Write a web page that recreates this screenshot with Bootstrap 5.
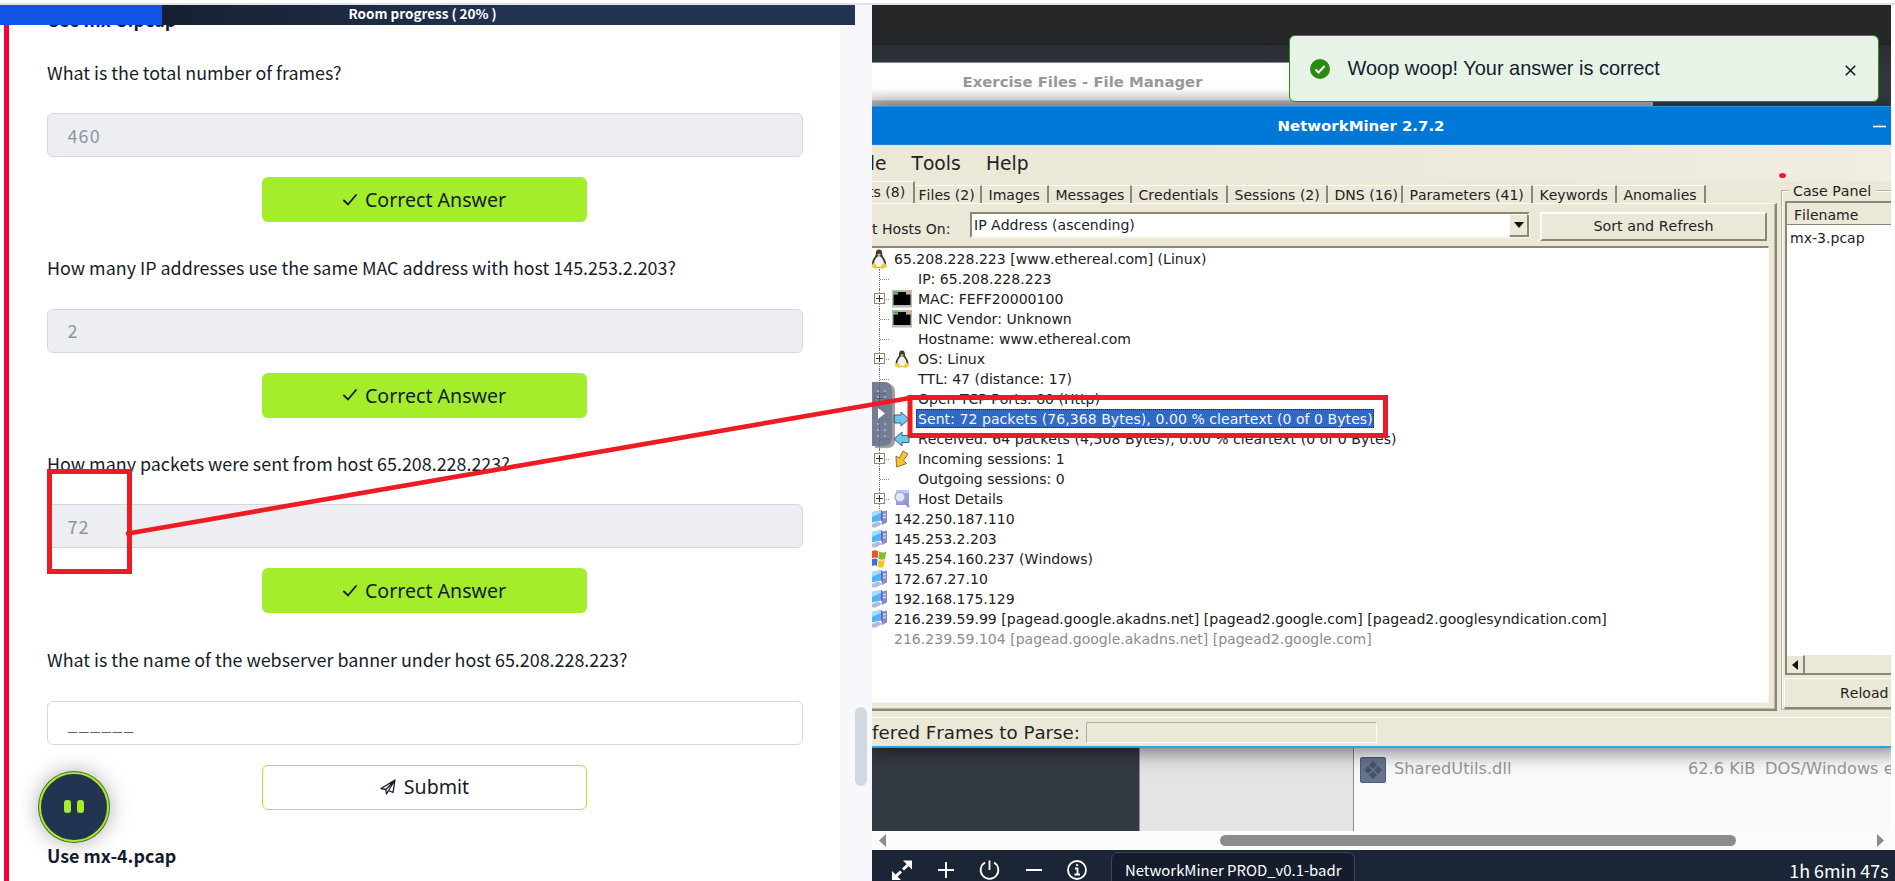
<!DOCTYPE html>
<html lang="en">
<head>
<meta charset="utf-8">
<title>Room - NetworkMiner</title>
<link href="https://cdn.jsdelivr.net/npm/bootstrap@5.3.0/dist/css/bootstrap.min.css" rel="stylesheet">
<script src="https://cdn.jsdelivr.net/npm/bootstrap@5.3.0/dist/js/bootstrap.bundle.min.js"></script>
<style>
body{height:881px;overflow:hidden;font-family:"Noto Sans CJK SC",sans-serif;font-size:17.89px;line-height:28px;color:#151c2b;background:#fff}
.topline{height:5px;border-bottom:2px solid #e1e2e8}
.split{height:876px}
/* left pane */
.room{width:872px;background:#f8f8fc}
.progressbar{width:855px;height:20px;z-index:2;background:linear-gradient(90deg,#172030 19%,#223452 62%);font-size:13.5px;line-height:16px;color:#fff}
.progressbar .done{width:162px;background:#1054e6}
.progressbar .lbl{left:348.5px;top:0}
.task{width:840px;height:876px;background:#fff;margin-top:-20px}
.task-in{border-left:5px solid #f0003c;margin-left:4px;padding-left:38px;height:876px}
.task p{margin:0}
.q{height:195.67px}
.q2 p,.q4 p{position:relative;top:-1px}
.q2 .answer{line-height:40px}
.q3{height:196.27px}
.q4{height:195.07px}
.answer{width:756px;height:44px;margin-top:27px;border:1px solid #d3d8e0;border-radius:6px;background:#edeef2;color:#8c95a6;padding:0 19.5px;line-height:42px;letter-spacing:1.1px;font-size:18px}
.answer.blank{background:#fff;color:#5d6675;letter-spacing:1.15px}
.actbtn{width:325px;height:45px;margin:20px 0 0 215px;border-radius:6px;background:#a3ed2a;font:19.6px/45px "Noto Sans",sans-serif;color:#151c2b}
.actbtn.line{background:#fff;border:1px solid #a3ed2a;line-height:42px}
.thumb{width:12px;height:79px;left:855px;top:702px;border-radius:6px;background:#d3d8e0}
.fab{left:39px;top:767px;width:70px;height:70px;border-radius:50%;background:#223452;border:2.5px solid #a3ed2a;box-shadow:0 0 0 1px #4d6a2e,0 0 22px rgba(0,0,0,.35)}
.fab i{width:6.5px;height:13px;border-radius:3px;background:#a3ed2a;margin-bottom:2px}
/* remote machine */
.vm{width:1023px;background:#fdfdfd}
.screen{width:1019px;height:826px;background:linear-gradient(#262729 0,#262729 38px,#1e2022 39px,#2b3036 41px,#343a42 90px);font-family:"DejaVu Sans",sans-serif;font-size:14.06px;line-height:20px;font-kerning:none;color:#232323}
.screen .filewin{left:0;top:57px;width:781px;height:60px;border-top:1px solid #85878a;background:linear-gradient(#fff 26px,#dedede 37px,#b0b0b0 38px)}
.filewin b{font-size:14.86px;color:#999;margin-left:90.5px;line-height:20px;margin-top:9px;display:block}
.filelist{left:267px;top:730px;width:760px;height:100px;background:#f9f9f9;color:#979797;border-left:1px solid #8d8f92}
.filelist .side{width:214px;flex:none;background:#e4e4e4;border-right:1px solid #8d8d8d}
.filelist .ln{font-size:16.2px;padding:22px 0 0 6px}
.filelist .ln svg{flex:none}
.filelist .ln span{flex:none;padding-top:2px}
.miner{left:0;top:101px;width:1030px;height:642px;background:#ebe8d8;border-bottom:2px solid #2ea3de;box-shadow:0 3px 20px rgba(0,0,0,.55)}
.titlebar{height:39px;background:#0078d7;border-top:1px solid #2b96dc;border-bottom:1px solid #2585d0;color:#fff;font-size:14.95px;line-height:39px}
.menus{height:36px;font-size:18.7px;line-height:38px;background:linear-gradient(90deg,#ebe8d8 30%,#f0ede1)}
.body-row{height:530px}
.tabs-col{width:905px}
.tabstrip{height:22px;padding-top:4px}
.tabstrip span{height:18px;line-height:19px;border-right:2px solid #8a8776;border-top:1px solid #fff;padding-left:6.5px;white-space:nowrap;flex:none}
.tabstrip .cur{height:22px;margin-top:-4px;line-height:20px;padding-left:0}
.tabbody{height:508px;border-right:2px solid #8a8776;border-bottom:2px solid #8a8776;border-top:1px solid #fdfcf8;padding-right:6px;box-shadow:inset -1px -1px 0 #bdb9a8}
.filt{height:42px;padding-top:8px}
.combo{width:560px;height:26px;margin-left:20px;background:#fff;border:2px solid;border-color:#8a8776 #f7f5ec #f7f5ec #8a8776;line-height:23px;padding-left:2px}
.combo u{width:19px;height:22px;background:#ebe8d8;border:1px solid;border-color:#fff #8a8776 #8a8776 #fff;box-shadow:1px 1px 0 #8a8776}
.sortbtn{width:227px;height:29px;margin-left:10px;border:2px solid;border-color:#fdfcf8 #8a8776 #8a8776 #fdfcf8;line-height:25px;font-size:14.3px}
.hosts{height:457px;background:#fff;border-top:2px solid #8a8776;border-right:1px solid #f7f5ec;border-bottom:1px solid #f7f5ec;padding-top:.5px;line-height:20px;color:#202020}
.hosts div{height:20px;white-space:nowrap;display:flex;align-items:center}
.hosts svg{flex:none}
.kid:before{content:"";width:11px;height:20px;margin-left:7px;flex:none;border-left:1px dotted #777;background:linear-gradient(90deg,#888 50%,transparent 0) 0 10px/2px 1px repeat-x}
.kid .bx{width:11px;height:11px;background:#fff;border:1px solid #8a8776;margin-left:-16.5px;margin-right:5.5px;flex:none}
.kid .bx:before,.kid .bx:after{content:"";position:absolute;background:#333}
.kid .bx:before{left:1px;top:4px;width:7px;height:1px}.kid .bx:after{left:4px;top:1px;width:1px;height:7px}
.kid .ic{width:20px;height:18px;margin:0 6px 0 2px;flex:none}
.root .ic{width:18px;height:20px;margin-right:4px}
.sel{background:#316ac5;color:#f2f5fb;outline:1px dotted #222;outline-offset:-1px;padding:0 1px 0 2px;margin-left:-2px;height:19px;line-height:20px}
.pk{letter-spacing:.05px}
.case-col{width:120px;margin-left:4px}
.grp{margin-top:9px;height:520px;border:1px solid #b5b2a1;box-shadow:inset 1px 1px 0 #fdfcf8}
.grp .cap{margin:-10px 0 0 7px;background:#ebe8d8;padding:0 4px;width:87px;height:20px;font-size:14.2px;line-height:20px;white-space:nowrap}
.caselist{margin:0 0 0 3px;height:474px;border:2px solid #8a8776;background:#fff}
.caselist .hd{background:#ebe8d8;height:22px;border-bottom:1px solid #8a8776;line-height:24px;padding-left:7px;margin-right:-10px}
.caselist .row1{padding-left:3px;line-height:20px;height:430px;padding-top:3px}
.hs{height:18px;background:#ebe8d8}
.hs b{width:18px;border-right:2px solid #8a8776;border-top:1px solid #fff}
.reload{margin:3px 0 0 2px;height:31px;border:1px solid #fff;border-bottom:2px solid #8a8776;line-height:29px;padding-left:55px;white-space:nowrap}
.stat{font-size:18.25px;line-height:29px;border-top:1px solid #fbfaf4;margin-top:6px;height:29px}
.groove{width:291px;height:21px;border:1px solid;border-color:#b0ad9c #fdfcf8 #fdfcf8 #b0ad9c;margin:4px 0 0 6px}
.handle{left:0;top:377px;width:20px;height:64px;border-radius:0 7px 7px 0;background:rgba(84,98,126,.82);box-shadow:3px 2px 1px rgba(90,90,90,.6)}
.hscroll{height:19px;background:#fcfcfc}
.dock{height:31px;background:#1c2536;color:#fff}
.dock .pill{left:239px;top:2px;width:244px;height:60px;border:1px solid #3c4659;border-radius:7px;background:#151c2b;font-size:14.9px;line-height:33px;padding-left:13px;white-space:nowrap}
.toastbox{left:1289px;top:35px;width:590px;height:67px;border:1px solid #2b8a12;border-radius:6px;background:#e8f3e8;font:19.97px/62px "Liberation Sans",sans-serif;color:#151c2b}
</style>
</head>
<body>
<svg width="0" height="0" class="position-absolute"><defs>
<symbol id="tux" viewBox="0 0 20 20"><path d="M10 .5c-2.700 0-3.300 2-3.200 4.500 0 2.500-3.800 5-3.800 9.500 0 3 2 4.500 7 4.500s7-1.500 7-4.500c0-4.500-3.800-7-3.800-9.500C13.300 2.500 12.700.5 10 .5z" fill="#3a3a3a"/><path d="M10 7c-2 0-5 4-5 8s3 3.500 5 3.500 5 .5 5-3.500-3-8-5-8z" fill="#f1f1f1"/><path d="M8 5.500 10 4.500l2 1L10 7.500z" fill="#f3b516"/><path d="M1.500 17.500l3.500-4 4 5-2 1.500zM18.500 17.500l-3.500-4-4 5 2 1.500z" fill="#f6c92c"/></symbol>
<symbol id="nic" viewBox="0 0 20 18"><path d="M0 0h20v17.500H0z" fill="#b9b9b9"/><path d="M1.500 4.500H6V2h8v2.500h4.500V15h-17z" fill="#000"/><path d="M1.500 1.500H6v2H1.500z" fill="#2fae2f"/><path d="M14 1.500h4.500v2H14z" fill="#f1a070"/></symbol>
<symbol id="ar" viewBox="0 0 20 18"><path d="M2 5h7V2l8 7-8 7v-3H2z" fill="#6fc6ee" stroke="#44617a"/></symbol>
<symbol id="al" viewBox="0 0 20 18"><path d="M17 5.500h-7V2L2 9l8 7v-3.500h7z" fill="#6fc6ee" stroke="#44617a"/></symbol>
<symbol id="ay" viewBox="0 0 20 18"><path d="M11 1l5 3-4.500 6.500 3 3-10 3.500L4 6l3.500 2z" fill="#f8c62c" stroke="#8d7425"/></symbol>
<symbol id="mag" viewBox="0 0 20 18"><path d="M4 0h13v15H4z" fill="#8f9af0"/><path d="M4 0h13v3H4z" fill="#c3caff"/><circle cx="8" cy="7" r="5" fill="#dceaff" stroke="#a9adb8" stroke-width="1.500"/><path d="M12 11l5 6" stroke="#9a9a9a" stroke-width="2.500"/></symbol>
<symbol id="pc" viewBox="0 0 18 20"><path d="M8 3l7-1.500v12L10 16z" fill="#8a88cf"/><path d="M11 5l3-.5v1.500l-3 .5zM11 8l3-.5V9l-3 .5z" fill="#d5d6f4"/><path d="M0 3l9-2v10.500L0 13.500z" fill="#4fb4f5"/><path d="M0 3l9-2v3L0 8z" fill="#a2dcff"/><path d="M9 1l1.300.7V12l-1.300-.5z" fill="#5a62bb"/><path d="M0 15l6-2.500 4 2.500-6 3.500H0z" fill="#b7b9da"/></symbol>
<symbol id="win" viewBox="0 0 18 20"><path d="M0 2q3-1.500 6 0v7Q3 8 0 9z" fill="#e8562a"/><path d="M7 2.500q4 2 7.500 0L13 10q-3 1.500-6.500 0z" fill="#7cc02f"/><path d="M0 10q3-1 5.500 0L5 17q-2-1.500-5 0z" fill="#3b6fe0"/><path d="M6.500 11q3 1.500 6.500 0l-1.500 7q-3 1.500-6 0z" fill="#f9c51f"/></symbol>
<symbol id="ck" viewBox="0 0 14 12"><path d="M1 6.500l4 4L13 1" fill="none" stroke="#151c2b" stroke-width="1.800" stroke-linecap="round"/></symbol>
</defs></svg>
<div class="topline"></div>
<main class="split d-flex">
  <section class="room position-relative">
    <div class="progressbar position-relative d-flex"><div class="done"></div><b class="lbl position-absolute">Room progress ( 20% )</b></div>
    <div class="task"><div class="task-in">
      <p class="fw-bold" style="height:53px">Use mx-3.pcap</p>
      <div class="q"><p>What is the total number of frames?</p><div class="answer">460</div>
        <div class="actbtn d-flex justify-content-center align-items-center"><svg width="14" height="12" class="me-2"><use href="#ck"/></svg>Correct Answer</div></div>
      <div class="q q2"><p>How many IP addresses use the same MAC address with host 145.253.2.203?</p><div class="answer">2</div>
        <div class="actbtn d-flex justify-content-center align-items-center"><svg width="14" height="12" class="me-2"><use href="#ck"/></svg>Correct Answer</div></div>
      <div class="q q3"><p>How many packets were sent from host 65.208.228.223?</p><div class="answer">72</div>
        <div class="actbtn d-flex justify-content-center align-items-center"><svg width="14" height="12" class="me-2"><use href="#ck"/></svg>Correct Answer</div></div>
      <div class="q q4"><p>What is the name of the webserver banner under host 65.208.228.223?</p><div class="answer blank">______</div>
        <div class="actbtn line d-flex justify-content-center align-items-center"><svg width="16" height="16" viewBox="0 0 16 16" class="me-2" fill="none" stroke="#151c2b" stroke-width="1.300" stroke-linejoin="round"><path d="M1 9.500 15 1l-2 12.500-4.500-2L6.500 15l-.7-4.500zM5.800 10.500 15 1 8.500 11.500"/></svg>Submit</div></div>
      <p class="fw-bold">Use mx-4.pcap</p>
    </div></div>
    <div class="thumb position-absolute"></div>
    <div class="fab position-absolute d-flex justify-content-center align-items-center"><i style="margin-right:6.500px"></i><i></i></div>
  </section>

  <section class="vm">
    <div class="screen position-relative overflow-hidden">
      <div class="filewin position-absolute"><b>Exercise Files - File Manager</b></div>
      <div class="filelist position-absolute d-flex"><div class="side"></div>
        <div class="ln d-flex"><svg width="26" height="26" viewBox="0 0 26 26"><rect x=".5" y=".5" width="25" height="25" rx="1.500" fill="#65758f" stroke="#505d70"/><path d="M13 4l4 4-4 4-4-4zM8 9l4 4-4 4-4-4zM18 9l4 4-4 4-4-4zM13 14l4 4-4 4-4-4z" fill="#46536a"/></svg><span style="width:294px;margin-left:8px">SharedUtils.dll</span><span style="width:77px">62.6 KiB</span><span class="text-nowrap">DOS/Windows e</span></div></div>
      <div class="miner position-absolute">
        <div class="titlebar d-flex"><b style="width:999px;padding-left:405.500px">NetworkMiner 2.7.2</b><svg width="16" height="37"><path d="M2 19.500h13" stroke="#fff" stroke-width="1.600"/></svg></div>
        <div class="menus d-flex"><span style="width:39.500px;text-indent:-2.200px">le</span><span style="width:74.500px">Tools</span><span>Help</span></div>
        <div class="body-row d-flex">
          <div class="tabs-col">
            <div class="tabstrip d-flex"><span class="cur" style="width:43px;text-indent:-4px">ts (8)</span><span style="width:67px;padding-left:3.500px">Files (2)</span><span style="width:67px">Images</span><span style="width:83px">Messages</span><span style="width:96px">Credentials</span><span style="width:100px">Sessions (2)</span><span style="width:75px">DNS (16)</span><span style="width:130px">Parameters (41)</span><span style="width:84px">Keywords</span><span style="width:89px">Anomalies</span></div>
            <div class="tabbody">
              <div class="filt d-flex"><span style="width:78px;margin-top:7px;white-space:nowrap">t Hosts On:</span>
                <div class="combo d-flex justify-content-between"><span>IP Address (ascending)</span><u class="d-flex align-items-center justify-content-center"><svg width="10" height="6"><path d="M0 0h10L5 6z" fill="#111"/></svg></u></div>
                <div class="sortbtn text-center">Sort and Refresh</div></div>
              <div class="hosts">
                <div class="root"><svg class="ic"><use href="#tux" x="-3" width="20" height="20"/></svg>65.208.228.223 [www.ethereal.com] (Linux)</div>
                <div class="kid"><i class="ic"></i>IP: 65.208.228.223</div>
                <div class="kid"><i class="bx position-relative"></i><svg class="ic"><use href="#nic"/></svg>MAC: FEFF20000100</div>
                <div class="kid"><svg class="ic"><use href="#nic"/></svg>NIC Vendor: Unknown</div>
                <div class="kid"><i class="ic"></i>Hostname: www.ethereal.com</div>
                <div class="kid"><i class="bx position-relative"></i><svg class="ic"><use href="#tux"/></svg>OS: Linux</div>
                <div class="kid"><i class="ic"></i>TTL: 47 (distance: 17)</div>
                <div class="kid"><i class="bx position-relative"></i><i class="ic"></i>Open TCP Ports: 80 (Http)</div>
                <div class="kid"><svg class="ic"><use href="#ar"/></svg><span class="sel pk">Sent: 72 packets (76,368 Bytes), 0.00 % cleartext (0 of 0 Bytes)</span></div>
                <div class="kid"><svg class="ic"><use href="#al"/></svg><span class="pk">Received: 64 packets (4,508 Bytes), 0.00 % cleartext (0 of 0 Bytes)</span></div>
                <div class="kid"><i class="bx position-relative"></i><svg class="ic"><use href="#ay"/></svg>Incoming sessions: 1</div>
                <div class="kid"><i class="ic"></i>Outgoing sessions: 0</div>
                <div class="kid"><i class="bx position-relative"></i><svg class="ic"><use href="#mag"/></svg>Host Details</div>
                <div class="root"><svg class="ic"><use href="#pc"/></svg>142.250.187.110</div>
                <div class="root"><svg class="ic"><use href="#pc"/></svg>145.253.2.203</div>
                <div class="root"><svg class="ic"><use href="#win"/></svg>145.254.160.237 (Windows)</div>
                <div class="root"><svg class="ic"><use href="#pc"/></svg>172.67.27.10</div>
                <div class="root"><svg class="ic"><use href="#pc"/></svg>192.168.175.129</div>
                <div class="root"><svg class="ic"><use href="#pc"/></svg>216.239.59.99 [pagead.google.akadns.net] [pagead2.google.com] [pagead2.googlesyndication.com]</div>
                <div class="root" style="color:#8c8c8c"><i class="ic"></i>216.239.59.104 [pagead.google.akadns.net] [pagead2.google.com]</div>
              </div>
            </div>
          </div>
          <div class="case-col"><div class="grp">
            <div class="cap">Case Panel</div>
            <div class="caselist"><div class="hd">Filename</div><div class="row1">mx-3.pcap</div>
              <div class="hs d-flex"><b class="d-flex align-items-center justify-content-center"><svg width="6" height="10"><path d="M6 0v10L0 5z" fill="#111"/></svg></b></div></div>
            <div class="reload">Reload</div>
          </div></div>
        </div>
        <div class="stat d-flex text-nowrap"><span>fered Frames to Parse:</span><div class="groove"></div></div>
      </div>
      <div class="handle position-absolute"><svg width="20" height="64"><path d="M6 26l7 5.500L6 37z" fill="#fff"/><g stroke="#a3abba" stroke-width="2" stroke-dasharray="2 4"><path d="M6 8v17M13 8v17M6 41v17M13 41v17"/></g></svg></div>
    </div>
    <div class="hscroll d-flex align-items-center"><svg width="1023" height="19"><path d="M14 3v13L7 9.500z" fill="#8b8b8b"/><rect x="348" y="4" width="516" height="11" rx="5.500" fill="#8b8b8b"/><path d="M1005 3v13l7-6.500z" fill="#8b8b8b"/></svg></div>
    <div class="dock position-relative d-flex justify-content-between overflow-hidden">
      <svg width="235" height="31" fill="none" stroke="#fff" stroke-width="2.200"><path d="M31 19.500l6-5.500M23 27l6-5.500" stroke-width="3"/><path d="M31 10.500h9v9zM20 21v9h9z" fill="#fff" stroke="none"/><path d="M66 20h16M74 12v16M154 20h16" stroke-width="1.900"/><path d="M113 12.500a8.800 8.800 0 1 0 9 0M117.500 10.500v9.500" stroke-width="1.800"/><circle cx="205" cy="20" r="9" stroke-width="1.800"/><path d="M203 18.500h2.500v5.500M202.500 24.500h5.500M204 15.200h2.200" stroke-width="1.800"/></svg>
      <div class="pill position-absolute">NetworkMiner PROD_v0.1-badr</div>
      <span style="margin-right:6.500px;line-height:40px">1h 6min 47s</span>
    </div>
  </section>
</main>

<div class="toastbox position-absolute d-flex align-items-center">
  <svg width="20" height="20" style="margin:0 17.500px 0 20px"><circle cx="10" cy="10" r="10" fill="#2b8a12"/><path d="M5.500 10.500l3 3 6-6.500" fill="none" stroke="#fff" stroke-width="2"/></svg>
  <span style="margin-top:-2px">Woop woop! Your answer is correct</span>
  <svg width="11" height="11" class="ms-auto" style="margin:3px 22.500px 0 0"><path d="M.8.8l9.400 9.400M10.200.8.8 10.200" stroke="#151c2b" stroke-width="1.600"/></svg>
</div>

<!-- red pen annotations over both panes -->
<svg class="position-absolute top-0 start-0" width="1895" height="881" style="z-index:5" fill="none" stroke="#ed1c24" stroke-width="5"><rect x="49.500" y="471.500" width="80" height="100"/><rect x="910" y="397.500" width="475.500" height="38"/><path d="M128 533.500L910 398" stroke-linecap="round" stroke-width="4.600"/><ellipse cx="1782.500" cy="175.500" rx="3.500" ry="2.500" fill="#ed1c24" stroke="none"/></svg>
</body>
</html>
